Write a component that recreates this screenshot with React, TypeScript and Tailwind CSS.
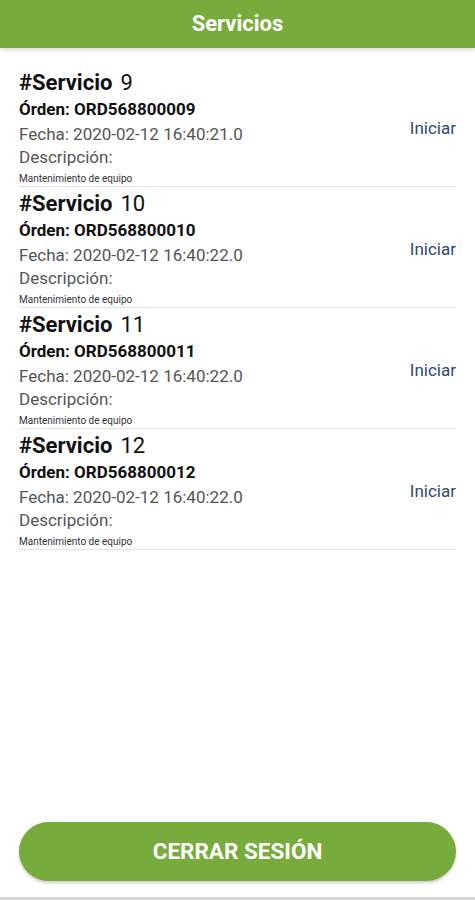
import React from "react";

const items = [
  { n: 9, orden: "ORD568800009", fecha: "2020-02-12 16:40:21.0" },
  { n: 10, orden: "ORD568800010", fecha: "2020-02-12 16:40:22.0" },
  { n: 11, orden: "ORD568800011", fecha: "2020-02-12 16:40:22.0" },
  { n: 12, orden: "ORD568800012", fecha: "2020-02-12 16:40:22.0" },
];

export default function App() {
  return (
    <div
      className="flex h-[900px] w-full flex-col bg-white"
      style={{ fontFamily: "Roboto, 'Noto Sans', sans-serif" }}
    >
      <div className="relative z-10 flex h-[48px] shrink-0 items-center justify-center bg-[#77ab3c] shadow-[0_2px_4px_rgba(0,0,0,0.15)]">
        <span className="pb-[2px] text-[22px] font-bold text-white">Servicios</span>
      </div>
      <div className="flex flex-col pt-[18px]">
        {items.map((it) => (
          <div
            key={it.n}
            className="mx-[19px] flex items-center border-b border-[#e2e2e2]"
          >
            <div className="flex flex-1 flex-col pt-[6px]">
              <div className="text-[22px] leading-[22px] text-[#111]">
                <span className="font-bold">#Servicio</span>
                <span className="ml-[8px]">{it.n}</span>
              </div>
              <div className="text-[17px] font-bold leading-[30px] text-[#111]">
                Órden: {it.orden}
              </div>
              <div className="text-[17px] leading-[20px] text-[#555]">
                Fecha: {it.fecha}
              </div>
              <div className="text-[17px] leading-[27px] text-[#555]">
                Descripción:
              </div>
              <div className="text-[10px] leading-[15px] text-[#333]">
                Mantenimiento de equipo
              </div>
            </div>
            <div className="mt-[3px] text-[17px] leading-[20px] text-[#2c4a78]">
              Iniciar
            </div>
          </div>
        ))}
      </div>
      <div className="flex-1" />
      <div className="mx-[19px] mb-[16px] flex h-[59px] items-center justify-center rounded-full bg-[#77ab3c] shadow-[0_2px_3px_rgba(0,0,0,0.2)]">
        <span className="text-[22.5px] font-bold text-white">CERRAR SESIÓN</span>
      </div>
      <div className="h-[3px] shrink-0 bg-[#d6d6d6]" />
    </div>
  );
}
